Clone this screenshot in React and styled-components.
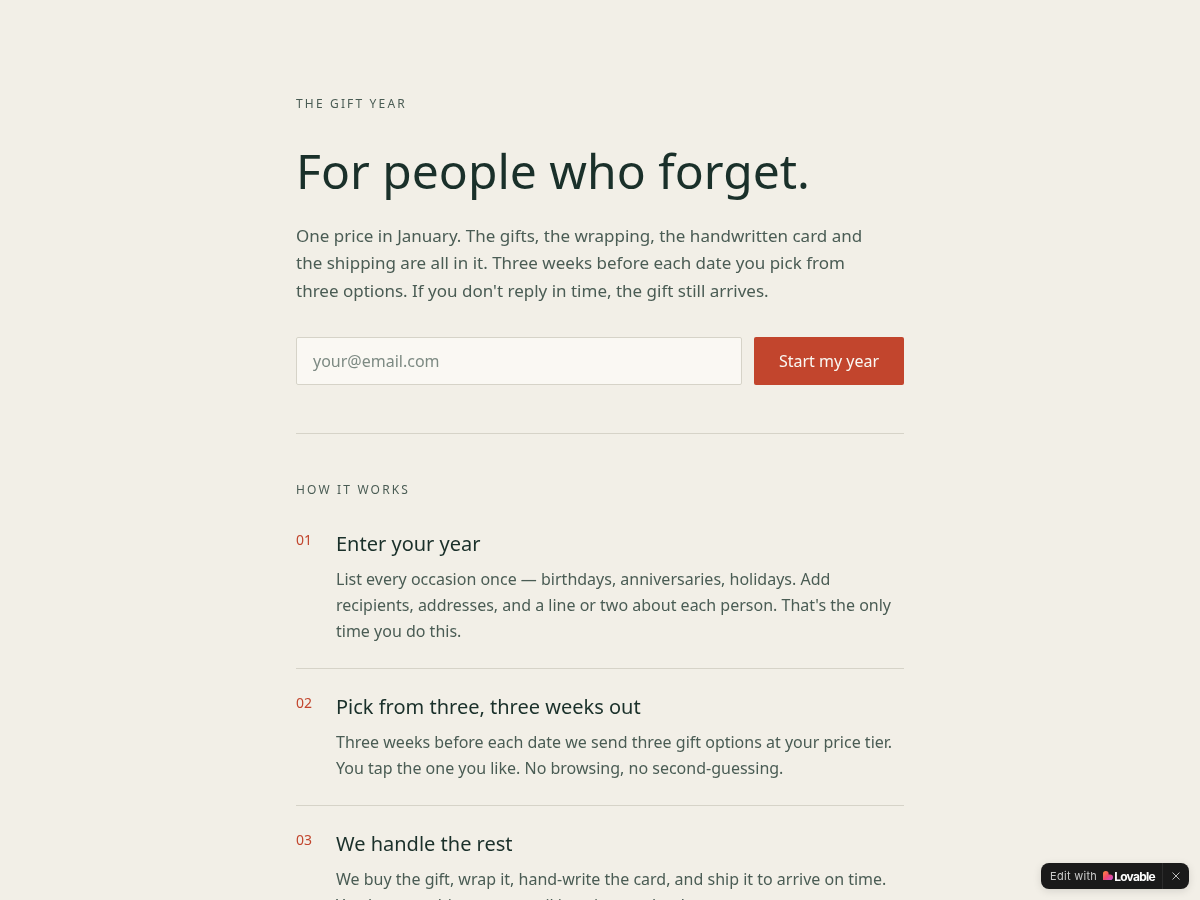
import React from "react";
import styled, { createGlobalStyle } from "styled-components";

const Global = createGlobalStyle`
  html, body { margin: 0; padding: 0; background: #f2efe7; height: 100%; overflow: hidden; }
  * { box-sizing: border-box; }
  body { font-family: "Noto Sans", sans-serif; }
`;
const Page = styled.main`
  width: 608px;
  margin: 0 auto;
  padding-top: 96px;
  will-change: opacity;
`;
const Eyebrow = styled.p`
  margin: 0;
  font-size: 12px;
  line-height: 16px;
  letter-spacing: 2.16px;
  text-transform: uppercase;
  color: #4a5c54;
`;
const Title = styled.h1`
  margin: 33px 0 0;
  font-size: 48px;
  line-height: 52.8px;
  font-weight: 400;
  letter-spacing: 0;
  color: #1a302a;
`;
const Lead = styled.p`
  margin: 24px 0 0;
  max-width: 576px;
  font-size: 17px;
  line-height: 27.6px;
  color: #4a5c54;
`;
const SignupForm = styled.form`
  display: flex;
  gap: 12px;
  margin-top: 32px;
`;
const EmailInput = styled.input`
  flex: 1;
  min-width: 0;
  height: 48px;
  padding: 0 16px;
  font: 400 16px "Noto Sans", sans-serif;
  color: #1a302a;
  background: #faf8f3;
  border: 1px solid #d6d3c8;
  border-radius: 2px;
  &::placeholder { color: #7d8a83; opacity: 1; }
`;
const SubmitButton = styled.button`
  width: 150px;
  height: 48px;
  padding: 0;
  font: 400 16px "Noto Sans", sans-serif;
  color: #faf8f3;
  background: #c2452d;
  border: 0;
  border-radius: 2px;
`;
const Divider = styled.hr`
  margin: 48px 0;
  border: 0;
  border-top: 1px solid #d6d3c8;
`;
const StepList = styled.ol`
  list-style: none;
  margin: 24px 0 0;
  padding: 0;
`;
const Step = styled.li`
  display: flex;
  padding: 24px 0;
  border-bottom: 1px solid #d6d3c8;
  &:first-child { padding-top: 8px; }
`;
const StepNumber = styled.span`
  flex: 0 0 40px;
  font-size: 14px;
  line-height: 20px;
  color: #c2452d;
`;
const StepBody = styled.div`
  flex: 1;
`;
const StepTitle = styled.h3`
  margin: 0;
  font-size: 20px;
  line-height: 28px;
  font-weight: 400;
  color: #1a302a;
`;
const StepText = styled.p`
  margin: 8px 0 0;
  font-size: 16px;
  line-height: 26px;
  color: #4a5c54;
`;
const Badge = styled.div`
  position: fixed;
  right: 11px;
  bottom: 11px;
  width: 148px;
  height: 26px;
  display: flex;
  align-items: center;
  background: #1a1a1a;
  border-radius: 8px;
  box-shadow: 0 2px 8px rgba(0,0,0,.12);
  font-family: Inter, sans-serif;
  will-change: opacity;
`;
const BadgeLink = styled.div`
  flex: 1;
  display: flex;
  align-items: center;
  padding-left: 9px;
  height: 100%;
  font-size: 11px;
  letter-spacing: .3px;
  color: #c9c9c9;
`;
const BadgeBrand = styled.span`
  display: inline-flex;
  align-items: center;
  margin-left: 6px;
  font-size: 12px;
  font-weight: 700;
  letter-spacing: -.75px;
  color: #fff;
`;
const BadgeClose = styled.div`
  width: 27px;
  height: 100%;
  display: flex;
  align-items: center;
  justify-content: center;
  border-left: 1px solid #2c2c2c;
`;

const steps = [
  ["01", "Enter your year", "List every occasion once — birthdays, anniversaries, holidays. Add recipients, addresses, and a line or two about each person. That's the only time you do this."],
  ["02", "Pick from three, three weeks out", "Three weeks before each date we send three gift options at your price tier. You tap the one you like. No browsing, no second-guessing."],
  ["03", "We handle the rest", "We buy the gift, wrap it, hand-write the card, and ship it to arrive on time. You know nothing more until it arrives at the door."],
];

export default function App() {
  return (
    <>
      <Global />
      <Page>
        <Eyebrow>The Gift Year</Eyebrow>
        <Title>For people who forget.</Title>
        <Lead>One price in January. The gifts, the wrapping, the handwritten card and the shipping are all in it. Three weeks before each date you pick from three options. If you don't reply in time, the gift still arrives.</Lead>
        <SignupForm onSubmit={(e) => e.preventDefault()}>
          <EmailInput type="email" placeholder="your@email.com" />
          <SubmitButton>Start my year</SubmitButton>
        </SignupForm>
        <Divider />
        <Eyebrow>How it works</Eyebrow>
        <StepList>
          {steps.map(([n, t, d]) => (
            <Step key={n}>
              <StepNumber>{n}</StepNumber>
              <StepBody>
                <StepTitle>{t}</StepTitle>
                <StepText>{d}</StepText>
              </StepBody>
            </Step>
          ))}
        </StepList>
      </Page>
      <Badge>
        <BadgeLink>
          Edit with
          <BadgeBrand>
            <svg width="10" height="10" viewBox="0 0 10 10" style={{ marginRight: 1 }}>
              <defs>
                <linearGradient id="lv" x1="0" y1="0" x2="1" y2="1">
                  <stop offset="0" stopColor="#ff8a3c" />
                  <stop offset=".5" stopColor="#f0476f" />
                  <stop offset="1" stopColor="#c04fd8" />
                </linearGradient>
              </defs>
              <path d="M2.8 0a2.8 2.8 0 0 1 2.8 2.8v.7h1.6a2.8 2.8 0 0 1 0 5.6H0V2.8A2.8 2.8 0 0 1 2.8 0z" fill="url(#lv)" />
            </svg>
            Lovable
          </BadgeBrand>
        </BadgeLink>
        <BadgeClose>
          <svg width="10" height="10" viewBox="0 0 10 10" fill="none" stroke="#bdbdbd" strokeWidth="1">
            <path d="M1.5 1.5l7 7M8.5 1.5l-7 7" />
          </svg>
        </BadgeClose>
      </Badge>
    </>
  );
}
